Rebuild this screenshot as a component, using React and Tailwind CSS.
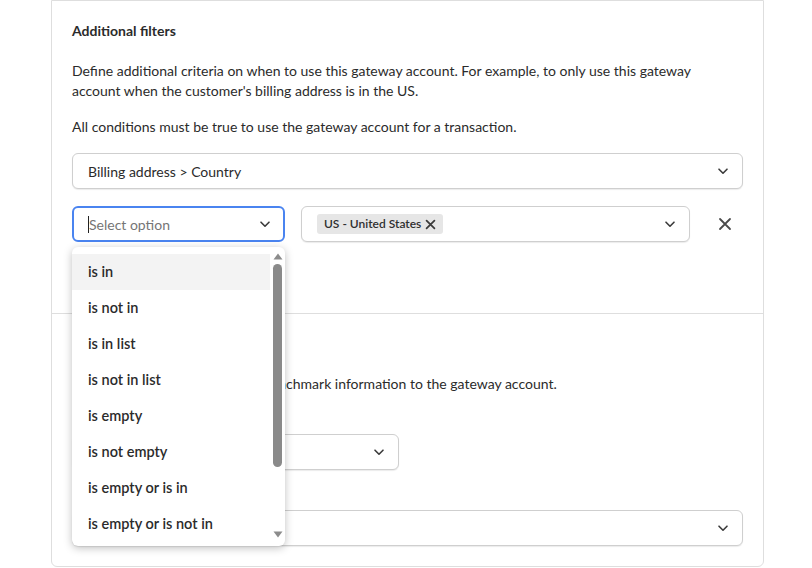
import React from "react";

const Chevron = ({ className = "" }) => (
  <svg className={className} width="12" height="12" viewBox="0 0 12 12" fill="none">
    <path d="M2 4.2 6 8.2 10 4.2" stroke="currentColor" strokeWidth="1.6" strokeLinecap="round" strokeLinejoin="round" />
  </svg>
);

const Cross = ({ size = 14, width = 1.8 }) => (
  <svg width={size} height={size} viewBox="0 0 14 14" fill="none">
    <path d="M2 2 12 12M12 2 2 12" stroke="currentColor" strokeWidth={width} strokeLinecap="round" />
  </svg>
);

const SelectBox = ({ children, className = "" }) => (
  <div
    className={`flex items-center justify-between h-[36px] pl-[15px] pr-[13px] bg-white border border-[#cfcfcf] rounded-md shadow-[0_1px_1px_rgba(0,0,0,0.08)] ${className}`}
  >
    <div className="flex items-center min-w-0">{children}</div>
    <Chevron className="text-[#3a3a3a] shrink-0" />
  </div>
);

const operators = [
  "is in",
  "is not in",
  "is in list",
  "is not in list",
  "is empty",
  "is not empty",
  "is empty or is in",
  "is empty or is not in",
  "is not empty and is in",
];

const OperatorMenu = () => (
  <div className="absolute left-0 top-[41px] w-[213px] h-[299px] bg-white rounded-md shadow-[0_2px_8px_rgba(0,0,0,0.25)] flex overflow-hidden z-10">
    <div className="flex-1 pt-[7px] overflow-hidden">
      {operators.map((op, i) => (
        <div
          key={op}
          className={`h-[36px] flex items-center pl-4 text-[14.5px] font-semibold text-[#2b2b2b] ${
            i === 0 ? "bg-[#f3f3f3]" : ""
          }`}
        >
          {op}
        </div>
      ))}
    </div>
    {/* scrollbar */}
    <div className="w-[15px] flex flex-col items-center pt-[6px] pb-[8px]">
      <svg width="10" height="7" viewBox="0 0 10 7">
        <path d="M5 0.5 9.5 6.5H0.5Z" fill="#8c8c8c" />
      </svg>
      <div className="mt-[4px] w-[9px] h-[203px] rounded-full bg-[#8a8a8a]" />
      <div className="flex-1" />
      <svg width="10" height="7" viewBox="0 0 10 7">
        <path d="M0.5 0.5H9.5L5 6.5Z" fill="#8c8c8c" />
      </svg>
    </div>
  </div>
);

export default function App() {
  return (
    <div className="w-[812px] h-[568px] bg-white overflow-hidden font-['Lato','Noto_Sans',sans-serif] text-[#2b2b2b]">
      <div className="ml-[51px] w-[713px] border border-[#dedede] rounded-b-md">
        {/* Additional filters */}
        <section className="px-5 pt-[20px] pb-[71px]">
          <h3 className="text-[14px] leading-5 font-bold">Additional filters</h3>
          <p className="mt-[20px] text-[14px] leading-5">
            Define additional criteria on when to use this gateway account. For example, to only use this gateway
            <br />
            account when the customer's billing address is in the US.
          </p>
          <p className="mt-4 text-[14px] leading-5">
            All conditions must be true to use the gateway account for a transaction.
          </p>

          <SelectBox className="mt-4 h-[35px] pl-[14px]">
            <span className="text-[14px]">Billing address &gt; Country</span>
          </SelectBox>

          <div className="mt-[17px] flex items-center">
            <div className="relative w-[213px] shrink-0">
              <div className="flex items-center justify-between h-[36px] pl-[14px] pr-[12px] bg-white border-2 border-[#4a84f0] rounded-md">
                <div className="flex items-center">
                  <span className="w-px h-[17px] bg-[#222]" />
                  <span className="text-[14px] text-[#757575]">Select option</span>
                </div>
                <Chevron className="text-[#3a3a3a]" />
              </div>
              <OperatorMenu />
            </div>
            <SelectBox className="ml-4 w-[389px] pl-[10px] pr-[12px]">
              <span className="flex items-center gap-[4px] h-[20px] px-[7px] rounded-[3px] bg-[#e6e6e6] text-[12px] font-semibold text-[#2f2f2f]">
                US - United States
                <span className="text-[#3a3a3a]">
                  <Cross size={11} width={2.2} />
                </span>
              </span>
            </SelectBox>
            <button className="ml-[28px] text-[#4a4a4a]">
              <Cross size={14} width={1.8} />
            </button>
          </div>
        </section>

        {/* Benchmark */}
        <section className="border-t border-[#dedede] px-5 pt-[19px] pb-5">
          <h3 className="text-[14px] leading-5 font-bold">Benchmark</h3>
          <p className="mt-[21px] text-[14px] leading-5">
            Use this section to provide the benchmark information to the gateway account.
          </p>
          <label className="block mt-[10px] text-[14px] leading-5 font-semibold">Benchmark type</label>
          <SelectBox className="mt-[10px] w-[327px] h-[35px]">
            <span className="text-[14px] text-[#757575]">Select option</span>
          </SelectBox>
          <label className="block mt-[10px] text-[14px] leading-5 font-semibold">Benchmark gateway</label>
          <SelectBox className="mt-[10px] h-[35px]">
            <span className="text-[14px] text-[#757575]">Select option</span>
          </SelectBox>
        </section>
      </div>
    </div>
  );
}
